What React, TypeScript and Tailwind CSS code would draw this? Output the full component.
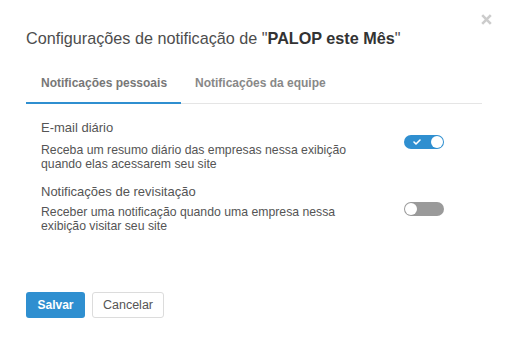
import React from "react";

function Toggle({ on }: { on: boolean }) {
  return on ? (
    <div className="relative w-[40px] h-[14px] rounded-full bg-[#2f8fd0]">
      <svg className="absolute left-[9px] top-[4px]" width="8" height="6" viewBox="0 0 8 6">
        <path d="M1 3 L3 5 L7 1" stroke="white" strokeWidth="1.6" fill="none" strokeLinecap="round" strokeLinejoin="round" />
      </svg>
      <div className="absolute right-[1px] top-[1px] w-[12px] h-[12px] rounded-full bg-white" />
    </div>
  ) : (
    <div className="relative w-[40px] h-[14px] rounded-full bg-[#9a9a9a]">
      <div className="absolute left-[1px] top-[1px] w-[12px] h-[12px] rounded-full bg-white" />
    </div>
  );
}

export default function App() {
  return (
    <div className="w-[509px] h-[340px] bg-white relative" style={{ fontFamily: '"Liberation Sans", Arial, sans-serif' }}>
      <div className="absolute left-[481px] top-[14px]">
        <svg width="11" height="11" viewBox="0 0 11 11">
          <path d="M1.2 1.2 L9.8 9.8 M9.8 1.2 L1.2 9.8" stroke="#cccccc" strokeWidth="2.6" />
        </svg>
      </div>
      <div className="px-[26px] pt-[28px]">
        <h1 className="text-[16.2px] leading-[20px] text-[#4d4d4d]">
          Configurações de notificação de "<b className="text-[#333]">PALOP este Mês</b>"
        </h1>
        <div className="mt-[27px] w-[456px] flex border-b border-[#e5e5e5]">
          <div className="w-[155px] pl-[15px] pt-[1px] text-[12px] leading-[15px] font-bold text-[#777] pb-[11px] border-b-2 border-[#2f8fd0] -mb-[1px]">
            Notificações pessoais
          </div>
          <div className="ml-[14px] pt-[1px] text-[12px] leading-[15px] font-bold text-[#888] pb-[11px]">
            Notificações da equipe
          </div>
        </div>
        <div className="pl-[15px] pr-[39px] mt-[16px] flex flex-col gap-[13px]">
          <div className="flex items-start justify-between">
            <div>
              <div className="text-[13px] leading-[16px] text-[#555]">E-mail diário</div>
              <div className="mt-[7px] text-[12.25px] leading-[14px] text-[#555]">
                Receba um resumo diário das empresas nessa exibição<br />quando elas acessarem seu site
              </div>
            </div>
            <div className="mt-[15px]"><Toggle on /></div>
          </div>
          <div className="flex items-start justify-between">
            <div>
              <div className="text-[13px] leading-[16px] text-[#555]">Notificações de revisitação</div>
              <div className="mt-[5px] text-[12.25px] leading-[14px] text-[#555]">
                Receber uma notificação quando uma empresa nessa<br />exibição visitar seu site
              </div>
            </div>
            <div className="mt-[18px]"><Toggle on={false} /></div>
          </div>
        </div>
        <div className="mt-[59px] flex gap-[7px]">
          <button className="w-[59px] h-[26px] rounded-[3px] bg-[#2f8fd0] text-white text-[12px] font-bold">Salvar</button>
          <button className="w-[72px] h-[26px] rounded-[3px] bg-white border border-[#dcdcdc] text-[#555] text-[12.5px]">Cancelar</button>
        </div>
      </div>
    </div>
  );
}
